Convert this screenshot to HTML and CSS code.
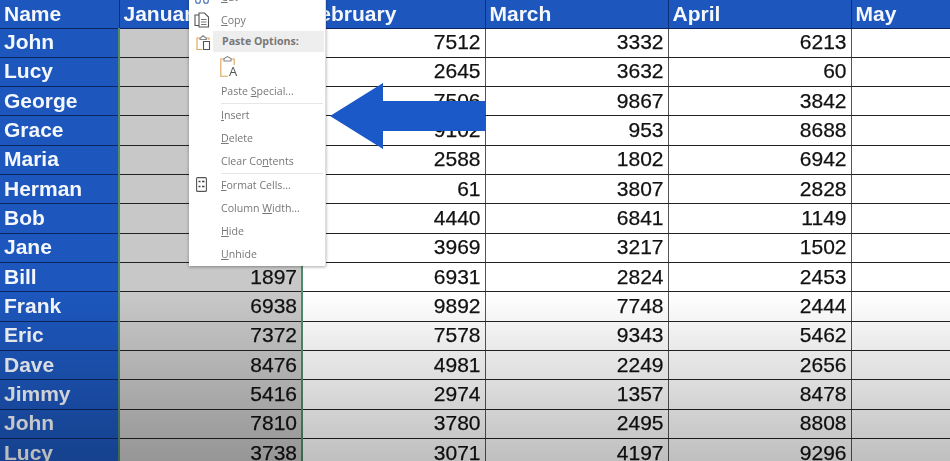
FILE: index.html
```html
<!DOCTYPE html>
<html lang="en">
<head>
<meta charset="utf-8">
<title>Excel column context menu</title>
<link rel="stylesheet" href="styles.css">
</head>
<body>
<div class="sheet">
<table class="grid">
<colgroup><col class="c-name"><col class="c-num"><col class="c-num"><col class="c-num"><col class="c-num"><col class="c-may"></colgroup>
<thead><tr><th>Name</th><th class="sel-head">January</th><th>February</th><th>March</th><th>April</th><th>May</th></tr></thead>
<tbody>
<tr><th>John</th><td class="sel"></td><td>7512</td><td>3332</td><td>6213</td><td></td></tr>
<tr><th>Lucy</th><td class="sel"></td><td>2645</td><td>3632</td><td>60</td><td></td></tr>
<tr><th>George</th><td class="sel"></td><td>7506</td><td>9867</td><td>3842</td><td></td></tr>
<tr><th>Grace</th><td class="sel"></td><td>9102</td><td>953</td><td>8688</td><td></td></tr>
<tr><th>Maria</th><td class="sel"></td><td>2588</td><td>1802</td><td>6942</td><td></td></tr>
<tr><th>Herman</th><td class="sel"></td><td>61</td><td>3807</td><td>2828</td><td></td></tr>
<tr><th>Bob</th><td class="sel"></td><td>4440</td><td>6841</td><td>1149</td><td></td></tr>
<tr><th>Jane</th><td class="sel"></td><td>3969</td><td>3217</td><td>1502</td><td></td></tr>
<tr><th>Bill</th><td class="sel">1897</td><td>6931</td><td>2824</td><td>2453</td><td></td></tr>
<tr><th>Frank</th><td class="sel">6938</td><td>9892</td><td>7748</td><td>2444</td><td></td></tr>
<tr><th>Eric</th><td class="sel">7372</td><td>7578</td><td>9343</td><td>5462</td><td></td></tr>
<tr><th>Dave</th><td class="sel">8476</td><td>4981</td><td>2249</td><td>2656</td><td></td></tr>
<tr><th>Jimmy</th><td class="sel">5416</td><td>2974</td><td>1357</td><td>8478</td><td></td></tr>
<tr><th>John</th><td class="sel">7810</td><td>3780</td><td>2495</td><td>8808</td><td></td></tr>
<tr><th>Lucy</th><td class="sel">3738</td><td>3071</td><td>4197</td><td>9296</td><td></td></tr>
</tbody>
</table>
<div class="fade"></div>
<svg class="arrow" viewBox="0 0 155 66" aria-hidden="true"><path d="M0 33 L53 0 V18 H155 V48 H53 V66 Z"/></svg>
<div class="menu">
  <div class="item"><svg class="ico" viewBox="0 0 16 16"><circle cx="4" cy="12" r="2.300" class="blue"/><circle cx="12" cy="12" r="2.300" class="blue"/><path d="M5.500 10 L11 1M10.500 10 L5 1"/></svg><span><u>C</u>ut</span></div>
  <div class="item"><svg class="ico" viewBox="0 0 16 16"><path d="M5 3H1V13.500H5M5 1H10.500L14.500 5V15H5Z"/><path d="M7 7.500H12.500M7 10H12.500M7 12.500H12.500" class="thin"/></svg><span><u>C</u>opy</span></div>
  <div class="item head"><svg class="ico wide" viewBox="0 0 15 15"><path class="or" d="M4 3H1V14.500H6M10.500 3H13V5"/><path d="M4 3.500L5 2.500L7 .8L9.500 2.500L10.500 3.500V4.500H4Z" class="lite"/><path d="M7.500 6.500H13.500V14.500H7.500Z"/></svg><span>Paste Options:</span></div>
  <div class="paste"><svg class="pasteico" viewBox="0 0 15 21"><path class="or" d="M4 3H.8V20.200H8M11 3H14.200V9"/><path d="M4 5V2.500L7.500 .6L11 2.500V5Z"/></svg><span class="a">A</span></div>
  <div class="item"><span>Paste <u>S</u>pecial...</span></div>
  <div class="sep"></div>
  <div class="item"><span><u>I</u>nsert</span></div>
  <div class="item"><span><u>D</u>elete</span></div>
  <div class="item"><span>Clear Co<u>n</u>tents</span></div>
  <div class="sep"></div>
  <div class="item"><svg class="ico narrow" viewBox="0 0 11 15"><rect x=".6" y=".6" width="9.800" height="13.800" rx="1"/><path class="mark" d="M2.500 4.500H4.500M6 4.500H8.500M2.500 9.500H4.500M6 9.500H8.500"/></svg><span><u>F</u>ormat Cells...</span></div>
  <div class="item"><span>Column <u>W</u>idth...</span></div>
  <div class="item"><span><u>H</u>ide</span></div>
  <div class="item"><span><u>U</u>nhide</span></div>
</div>
</div>
</body>
</html>
```
FILE: styles.css
```css
html, body {
  margin: 0;
  padding: 0;
  background: #fff;
}
.sheet {
  position: relative;
  width: 950px;
  height: 461px;
  overflow: hidden;
  font-family: "Liberation Sans", Arial, sans-serif;
  filter: blur(0.35px);
}
.grid {
  table-layout: fixed;
  border-collapse: collapse;
  width: 958px;
  font-size: 21px;
  color: #111;
}
.c-name { width: 119px; }
.c-num { width: 183px; }
.c-may { width: 107px; }
.grid tr { height: 29.33px; }
.grid thead tr { height: 28px; }
.grid th, .grid td {
  padding: 0 4px;
  line-height: 24px;
  white-space: nowrap;
  overflow: hidden;
  box-sizing: border-box;
}
.grid thead th {
  background: #1d57bd;
  color: #f4f7fc;
  text-align: left;
  font-weight: 700;
  border-right: 1px solid #0d2f78;
  border-bottom: 1px solid #0a2560;
}
.grid tbody th {
  background: #1d57bd;
  color: #f4f7fc;
  text-align: left;
  font-weight: 700;
  border-bottom: 1px solid #0a2560;
  padding-bottom: 1px;
}
.grid td {
  text-align: right;
  border-left: 1px solid #555;
  border-bottom: 1px solid #222;
  padding-bottom: 1px;
  -webkit-text-stroke: 0.25px #111;
}
.grid td.sel {
  background: #c8c8c8;
  border-left: 2px solid #4f8a6c;
  border-right: 2px solid #4f8a6c;
}
.fade {
  position: absolute;
  left: 0;
  right: 0;
  top: 292px;
  bottom: 0;
  background: linear-gradient(to bottom, rgba(0,0,0,0), rgba(0,0,0,0.25));
  pointer-events: none;
}
.arrow {
  position: absolute;
  left: 330px;
  top: 83px;
  width: 155px;
  height: 66px;
}
.arrow path { fill: #1b59c9; }
.menu {
  position: absolute;
  left: 189px;
  top: -15px;
  width: 137px;
  height: 281px;
  box-sizing: border-box;
  background: #fff;
  border-right: 1px solid #ddd;
  box-shadow: 0 1px 3px rgba(0,0,0,0.35);
  font-family: "Open Sans", "Liberation Sans", sans-serif;
  font-size: 10.6px;
  color: #777;
}
.item {
  position: relative;
  height: 23px;
  display: flex;
  align-items: center;
  padding-left: 32px;
}
.item u { text-decoration-thickness: 1px; }
.head {
  margin-left: 24px;
  margin-right: 1px;
  padding-left: 9px;
  height: 20.5px;
  background: #eeeeee;
  font-weight: 700;
}
.ico {
  position: absolute;
  left: 5px;
  top: 4px;
  width: 16px;
  height: 16px;
  fill: none;
  stroke: #555;
  stroke-width: 1.1;
}
.ico.wide {
  left: -17px;
  top: 4px;
  width: 15px;
  height: 15px;
}
.ico.narrow {
  left: 7px;
  top: 3px;
  width: 11px;
  height: 15px;
}
.ico .thin { stroke: #777; }
.ico .mark { stroke: #444; stroke-width: 1.6; }
.ico .blue { stroke: #3d6fb5; }
.ico .lite { stroke: #888; }
.ico .or, .pasteico .or { stroke: #e0a458; }
.paste {
  position: relative;
  height: 28px;
  box-sizing: border-box;
  padding-bottom: 3px;
  margin-left: 31px;
  display: flex;
  align-items: flex-end;
}
.pasteico {
  width: 15px;
  height: 21px;
  fill: none;
  stroke: #888;
  stroke-width: 1.1;
}
.a {
  position: absolute;
  left: 9px;
  bottom: 0;
  font-size: 13px;
  color: #555;
}
.sep {
  height: 1px;
  margin: 0 2px 0 32px;
  background: #e6e6e6;
}
```
